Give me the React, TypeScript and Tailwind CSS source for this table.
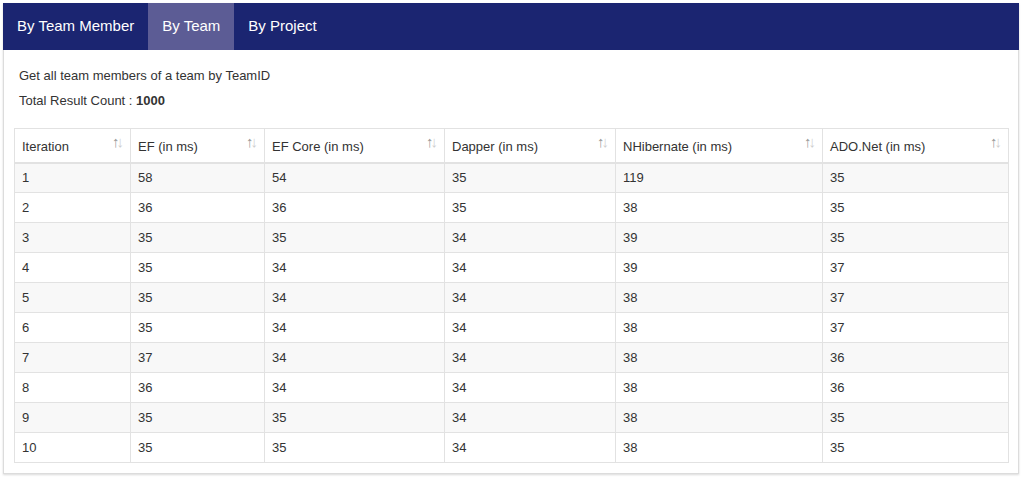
const columns = [
  { label: "Iteration", width: "w-[116px]" },
  { label: "EF (in ms)", width: "w-[134px]" },
  { label: "EF Core (in ms)", width: "w-[180px]" },
  { label: "Dapper (in ms)", width: "w-[171px]" },
  { label: "NHibernate (in ms)", width: "w-[207px]" },
  { label: "ADO.Net (in ms)", width: "w-[186px]" },
];

const rows = [
  [1, 58, 54, 35, 119, 35],
  [2, 36, 36, 35, 38, 35],
  [3, 35, 35, 34, 39, 35],
  [4, 35, 34, 34, 39, 37],
  [5, 35, 34, 34, 38, 37],
  [6, 35, 34, 34, 38, 37],
  [7, 37, 34, 34, 38, 36],
  [8, 36, 34, 34, 38, 36],
  [9, 35, 35, 34, 38, 35],
  [10, 35, 35, 34, 38, 35],
];

const tabs = ["By Team Member", "By Team", "By Project"];

function SortIcon() {
  return (
    <span className="text-[15px] leading-none tracking-[-3px] text-[#cfcfcf] select-none">
      <span className="text-[#9a9a9a]">↑</span>↓
    </span>
  );
}

export default function App() {
  return (
    <div className="min-h-[478px] bg-white font-['Liberation_Sans',Arial,sans-serif] pt-[3px]">
      <div className="ml-[3px] w-[1016px] shadow-[0_1px_2px_rgba(0,0,0,0.15)]">
        <nav className="flex h-[47px] bg-[#1b2571]">
          {tabs.map((t) => (
            <div
              key={t}
              className={`flex items-center px-[14px] text-[15px] text-white ${
                t === "By Team" ? "bg-[#5c5c95]" : ""
              }`}
            >
              {t}
            </div>
          ))}
        </nav>
        <div className="border border-t-0 border-[#dcdcdc] px-[10px] pb-[10px]">
          <div className="px-[5px] pt-[18px] text-[13px] text-[#333]">
            <p className="leading-[16px]">Get all team members of a team by TeamID</p>
            <p className="mt-[9px] leading-[16px]">
              Total Result Count : <b>1000</b>
            </p>
          </div>
          <table className="mt-[19px] w-[994px] table-fixed border-collapse text-[13px] text-[#333]">
            <thead>
              <tr className="h-[34px]">
                {columns.map((c) => (
                  <th
                    key={c.label}
                    className={`${c.width} border border-b-2 border-[#e2e2e2] px-[7px] text-left align-top font-normal`}
                  >
                    <div className="flex items-start justify-between pt-[6px]">
                      <span className="mt-[2px]">{c.label}</span>
                      <span className="-mt-[2px] mr-[2px]">
                        <SortIcon />
                      </span>
                    </div>
                  </th>
                ))}
              </tr>
            </thead>
            <tbody>
              {rows.map((r, i) => (
                <tr key={i} className={`h-[30px] ${i % 2 === 0 ? "bg-[#f8f8f8]" : "bg-white"}`}>
                  {r.map((v, j) => (
                    <td key={j} className="border border-[#e2e2e2] px-[7px]">
                      {v}
                    </td>
                  ))}
                </tr>
              ))}
            </tbody>
          </table>
        </div>
      </div>
    </div>
  );
}
